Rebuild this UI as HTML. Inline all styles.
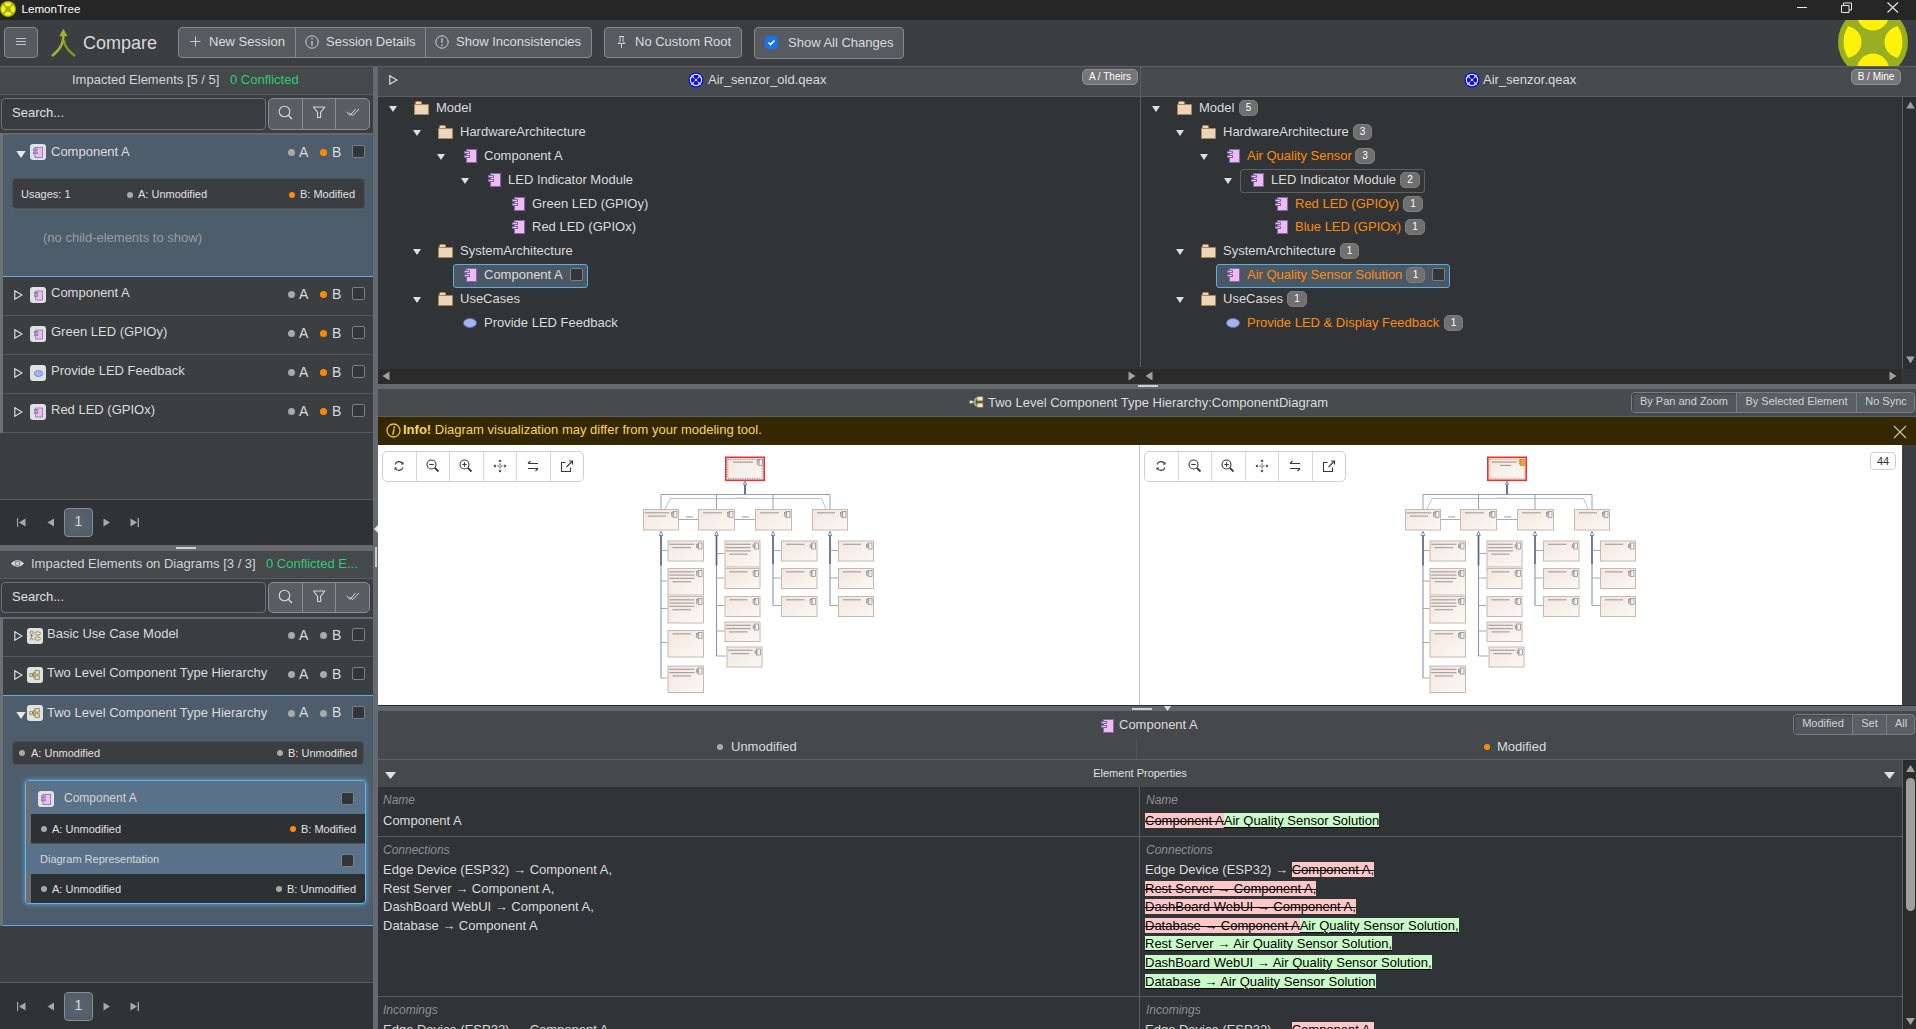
<!DOCTYPE html>
<html><head><meta charset="utf-8">
<style>
*{box-sizing:border-box;margin:0;padding:0}
html,body{width:1916px;height:1029px;overflow:hidden;background:#3b3f42}
body{font-family:"Liberation Sans",sans-serif;font-size:13px;color:#dcdcdc;position:relative}
.a{position:absolute}
.t{position:absolute;white-space:nowrap;line-height:16px}
svg{display:block}
/* title */
#title{left:0;top:0;width:1916px;height:20px;background:#262626}
#toolbar{left:0;top:20px;width:1916px;height:46px;background:#3b3f42;overflow:hidden}
.btn{position:absolute;background:#565b5f;border:1px solid #85898c;border-radius:4px}
.hl{position:absolute;background:#5d6165}
/* left */
.lhdr{background:#45494c}
.row{position:absolute;left:3px;width:370px;height:39px;border-bottom:1px solid #56595c;background:#3b3f42}
.strip{position:absolute;left:0;width:3px;background:#6b7075}
.ibox{position:absolute;width:16px;height:16px;border-radius:3px;background:#dfe1e3}
.dot{position:absolute;width:7px;height:7px;border-radius:50%;background:#a9a9a9}
.dot.o{background:#ff8a00}
.sdot{position:absolute;width:6px;height:6px;border-radius:50%;background:#a9a9a9}
.sdot.o{background:#ff8a00}
.cb{position:absolute;width:13px;height:13px;border:1px solid #7b7f82;border-radius:2px;background:#333638}
.tri-r{position:absolute;width:0;height:0}
.badge{position:absolute;height:15px;border-radius:5px;background:#707070;border:1px solid #7e7e7e;color:#fff;font-size:10px;line-height:13px;text-align:center;font-weight:normal}
.orange{color:#ff8a0d}
</style></head>
<body>
<svg width="0" height="0" style="position:absolute">
<defs>
<symbol id="comp" viewBox="0 0 13 14">
<rect x="2.5" y="0.5" width="10" height="13" fill="#f0baf0" stroke="#7c6aa6"/>
<rect x="0.5" y="2.5" width="5" height="2" fill="#f0baf0" stroke="#7c6aa6"/>
<rect x="0.5" y="6.5" width="5" height="2" fill="#f0baf0" stroke="#7c6aa6"/>
</symbol>
<symbol id="folder" viewBox="0 0 16 14">
<path d="M1.5 3.5 V1.5 Q1.5 0.5 2.5 0.5 H6.5 Q7.5 0.5 7.5 1.5 V3.5z" fill="#ecd5ba" stroke="#a98458" stroke-width="1"/>
<path d="M0.5 3.5 h14 v10 h-14z" fill="#ecd5ba" stroke="#a98458" stroke-width="1"/>
</symbol>
<symbol id="ellipse" viewBox="0 0 14 10">
<ellipse cx="7" cy="5" rx="6.5" ry="4.5" fill="#a5b4f0" stroke="#5a6aa8" stroke-width="1"/>
</symbol>
<symbol id="trid" viewBox="0 0 8 6"><path d="M0 0 H8 L4 6z" fill="#e0e0e0"/></symbol>
<symbol id="trio" viewBox="0 0 9 10"><path d="M0.8 0.8 L8 5 L0.8 9.2z" fill="none" stroke="#e4e4e4" stroke-width="1.15" stroke-linejoin="miter"/></symbol>
<symbol id="ucd" viewBox="0 0 14 14">
<circle cx="3" cy="3" r="1.8" fill="none" stroke="#7a7040" stroke-width="0.9"/><path d="M3 5V9M1 6.5H5M3 9L1.2 12M3 9L4.8 12" stroke="#7a7040" stroke-width="0.9" fill="none"/>
<ellipse cx="10" cy="4" rx="3.3" ry="2" fill="#f0e0b0" stroke="#7a7040" stroke-width="0.9"/><ellipse cx="10" cy="10" rx="3.3" ry="2" fill="#f0e0b0" stroke="#7a7040" stroke-width="0.9"/>
</symbol>
<symbol id="cd" viewBox="0 0 14 14">
<rect x="7" y="2" width="5" height="4" fill="#f0e0b0" stroke="#7a7040" stroke-width="0.9"/><rect x="7" y="8" width="5" height="4" fill="#f0e0b0" stroke="#7a7040" stroke-width="0.9"/>
<rect x="1" y="5.5" width="3" height="3" fill="#f0e0b0" stroke="#7a7040" stroke-width="0.9"/><path d="M4 7H5.5V4H7M5.5 7V10H7" fill="none" stroke="#7a7040" stroke-width="0.9"/>
</symbol>
</defs>
</svg>

<!-- TITLE BAR -->
<div id="title" class="a">
<svg class="a" style="left:0;top:0.5px" width="16" height="16" viewBox="0 0 70 70">
<defs><clipPath id="lc1"><circle cx="35" cy="35" r="29.5"/></clipPath></defs>
<circle cx="35" cy="35" r="35" fill="#9aae22"/>
<g clip-path="url(#lc1)" fill="#fff10a"><circle cx="7.5" cy="35" r="16"/><circle cx="62.5" cy="35" r="16"/><circle cx="35" cy="7.5" r="16"/><circle cx="35" cy="62.5" r="16"/></g>
</svg>
<div class="t" style="left:21.5px;top:2px;font-size:11.6px;color:#fff;line-height:14px">LemonTree</div>
<div class="a" style="left:1797px;top:7px;width:10px;height:1px;background:#e8e8e8"></div>
<svg class="a" style="left:1841px;top:2px" width="12" height="11" viewBox="0 0 12 11"><path d="M0.5 3.5h7.5v7h-7.5z M2.5 3.5v-2.5h8v7h-2.5" fill="none" stroke="#e8e8e8" stroke-width="1"/></svg>
<svg class="a" style="left:1887px;top:2px" width="12" height="11" viewBox="0 0 12 11"><path d="M0.5 0.5L11 10.5M11 0.5L0.5 10.5" fill="none" stroke="#e8e8e8" stroke-width="1.1"/></svg>
</div>

<!-- TOOLBAR -->
<div id="toolbar" class="a">
<div class="btn" style="left:4px;top:7px;width:34px;height:31px"></div>
<div class="a" style="left:16px;top:18px;width:10px;height:1px;background:#c4c4c4"></div>
<div class="a" style="left:16px;top:21px;width:10px;height:1px;background:#c4c4c4"></div>
<div class="a" style="left:16px;top:24px;width:10px;height:1px;background:#c4c4c4"></div>
<svg class="a" style="left:50px;top:8px" width="27" height="29" viewBox="50 28 27 29">
<path d="M63.8 40 C64.5 47 69 51 75 56" fill="none" stroke="#86951f" stroke-width="2.5"/>
<path d="M63.4 35 C63.4 45 59 50 52 56" fill="none" stroke="#a3b22e" stroke-width="2.5"/>
<path d="M63.4 28.8 L59.2 36.2 H67.6z" fill="#a3b22e"/>
</svg>
<div class="t" style="left:83px;top:13px;font-size:18px;line-height:20px;color:#dadada">Compare</div>
<div class="btn" style="left:178px;top:7px;width:414px;height:31px"></div>
<div class="a" style="left:295px;top:8px;width:1px;height:29px;background:#85898c"></div>
<div class="a" style="left:425px;top:8px;width:1px;height:29px;background:#85898c"></div>
<svg class="a" style="left:190px;top:16px" width="11" height="11" viewBox="0 0 11 11"><path d="M5.5 0.5V10.5M0.5 5.5H10.5" stroke="#d0d0d0" stroke-width="1"/></svg>
<div class="t" style="left:209px;top:14px;color:#dcdcdc">New Session</div>
<svg class="a" style="left:305px;top:15px" width="14" height="14" viewBox="0 0 14 14"><circle cx="7" cy="7" r="6.2" fill="none" stroke="#d0d0d0" stroke-width="1"/><path d="M7 6V11" stroke="#d0d0d0" stroke-width="1.2"/><circle cx="7" cy="3.8" r="0.8" fill="#d0d0d0"/></svg>
<div class="t" style="left:326px;top:14px;color:#dcdcdc">Session Details</div>
<svg class="a" style="left:435px;top:15px" width="14" height="14" viewBox="0 0 14 14"><circle cx="7" cy="7" r="6.2" fill="none" stroke="#d0d0d0" stroke-width="1"/><path d="M7 3V8" stroke="#d0d0d0" stroke-width="1.2"/><circle cx="7" cy="10.2" r="0.8" fill="#d0d0d0"/></svg>
<div class="t" style="left:456px;top:14px;color:#dcdcdc">Show Inconsistencies</div>
<div class="btn" style="left:604px;top:7px;width:138px;height:31px"></div>
<svg class="a" style="left:616px;top:15px" width="11" height="14" viewBox="0 0 11 14"><path d="M3 1.5H8M4 1.5V6.5L2 8.5H9L7 6.5V1.5M5.5 8.5V13" fill="none" stroke="#d0d0d0" stroke-width="1"/></svg>
<div class="t" style="left:635px;top:14px;color:#dcdcdc">No Custom Root</div>
<div class="btn" style="left:754px;top:7px;width:150px;height:32px"></div>
<div class="a" style="left:765px;top:16px;width:13px;height:13px;border-radius:3px;background:#1a73e8"></div>
<svg class="a" style="left:765px;top:16px" width="13" height="13" viewBox="0 0 13 13"><path d="M3.5 6.5L5.5 8.5L9.5 4.5" fill="none" stroke="#fff" stroke-width="1.6"/></svg>
<div class="t" style="left:788px;top:15px;color:#dcdcdc">Show All Changes</div>
<svg class="a" style="left:1837px;top:-14px" width="72" height="72" viewBox="-1 -1 72 72">
<defs><clipPath id="lc2"><circle cx="35" cy="35" r="29.5"/></clipPath></defs>
<circle cx="35" cy="35" r="35" fill="#9aae22"/>
<g clip-path="url(#lc2)" fill="#fff10a"><circle cx="7.5" cy="35" r="16"/><circle cx="62.5" cy="35" r="16"/><circle cx="35" cy="7.5" r="16"/><circle cx="35" cy="62.5" r="16"/></g>
</svg>
</div>
<div class="a" style="left:0;top:66px;width:1916px;height:1px;background:#5d6165"></div>

<!-- LEFT PANEL -->
<div class="a" style="left:0;top:67px;width:373px;height:962px;background:#3b3f42"></div>
<div class="a" style="left:0;top:67px;width:373px;height:27px;background:#45494c"></div>
<div class="a" style="left:0;top:94px;width:373px;height:1px;background:#5a5e61"></div>
<div class="t" style="left:72px;top:72px;color:#d4d4d4">Impacted Elements [5 / 5]</div>
<div class="t" style="left:230px;top:72px;color:#2ecc71">0 Conflicted</div>
<div class="a" style="left:1px;top:98px;width:265px;height:32px;border:1px solid #6d7174;border-radius:4px;background:#393d40"></div>
<div class="t" style="left:12px;top:105px;color:#e0e0e0">Search...</div>
<div class="a" style="left:268px;top:98px;width:102px;height:32px;border:1px solid #8a8e91;border-radius:5px;background:#595e62"></div>
<div class="a" style="left:302px;top:99px;width:1px;height:30px;background:#8a8e91"></div>
<div class="a" style="left:335px;top:99px;width:1px;height:30px;background:#8a8e91"></div>
<svg class="a" style="left:278px;top:105px" width="16" height="16" viewBox="0 0 16 16"><circle cx="6.5" cy="6.5" r="5.3" fill="none" stroke="#d8d8d8" stroke-width="1.1"/><path d="M10.3 10.3L14 14" stroke="#d8d8d8" stroke-width="1.4"/></svg>
<svg class="a" style="left:312px;top:106px" width="14" height="13" viewBox="0 0 14 13"><path d="M1.5 1H12.8L8.6 6.3V11.5H5.6V6.3z" fill="none" stroke="#d8d8d8" stroke-width="1.1" stroke-linejoin="round"/></svg>
<svg class="a" style="left:346px;top:108px" width="14" height="9" viewBox="0 0 14 9"><path d="M0.7 3.7L4.2 7.5L9.5 1M3.5 5L6.9 7.5L13 1" fill="none" stroke="#d8d8d8" stroke-width="1"/></svg>
<div class="a" style="left:0;top:133px;width:373px;height:2px;background:#65696c"></div>
<!-- selected item -->
<div class="a" style="left:0;top:133px;width:3px;height:144px;background:#6c7175"></div>
<div class="a" style="left:3px;top:135px;width:370px;height:141px;background:#4d5d6c"></div>
<div class="a" style="left:3px;top:276px;width:370px;height:1px;background:#5aaee0"></div>
<svg class="a" style="left:16px;top:151px" width="10" height="7" viewBox="0 0 8 6"><path d="M0 0H8L4 6z" fill="#e8e8e8"/></svg>
<div class="ibox" style="left:30px;top:144px"></div>
<svg class="a" style="left:33px;top:147px" width="10" height="11"><use href="#comp"/></svg>
<div class="t" style="left:51px;top:144px">Component A</div>
<div class="dot" style="left:288px;top:149px"></div><div class="t" style="left:299px;top:144px;font-size:14px">A</div>
<div class="dot o" style="left:320px;top:149px"></div><div class="t" style="left:332px;top:144px;font-size:14px">B</div>
<div class="cb" style="left:352px;top:145px"></div>

<div class="a" style="left:12px;top:178px;width:353px;height:31px;border-radius:4px;background:#3a3e41;border:1px solid #4e5255"></div>
<div class="t" style="left:21px;top:186px;font-size:11px;color:#e0e0e0">Usages: 1</div>
<div class="sdot" style="left:127px;top:192px"></div><div class="t" style="left:138px;top:186px;font-size:11px;color:#e0e0e0">A: Unmodified</div>
<div class="sdot o" style="left:289px;top:192px"></div><div class="t" style="left:300px;top:186px;font-size:11px;color:#e0e0e0">B: Modified</div>
<div class="t" style="left:43px;top:230px;color:#9a9ea2">(no child-elements to show)</div>
<div class="a" style="left:3px;top:277px;width:370px;height:38px;background:#3b3f42"></div>
<div class="a" style="left:3px;top:315px;width:370px;height:1px;background:#56595c"></div>
<svg class="a" style="left:14px;top:290px" width="9" height="10"><use href="#trio"/></svg>
<div class="ibox" style="left:30px;top:287px"></div>
<svg class="a" style="left:34px;top:290px" width="9" height="11"><use href="#comp"/></svg>
<div class="t" style="left:51px;top:285px">Component A</div>
<div class="dot" style="left:288px;top:291px"></div><div class="t" style="left:299px;top:286px;font-size:14px">A</div>
<div class="dot o" style="left:320px;top:291px"></div><div class="t" style="left:332px;top:286px;font-size:14px">B</div>
<div class="cb" style="left:352px;top:287px"></div>
<div class="a" style="left:3px;top:316px;width:370px;height:38px;background:#3b3f42"></div>
<div class="a" style="left:3px;top:354px;width:370px;height:1px;background:#56595c"></div>
<svg class="a" style="left:14px;top:329px" width="9" height="10"><use href="#trio"/></svg>
<div class="ibox" style="left:30px;top:326px"></div>
<svg class="a" style="left:34px;top:329px" width="9" height="11"><use href="#comp"/></svg>
<div class="t" style="left:51px;top:324px">Green LED (GPIOy)</div>
<div class="dot" style="left:288px;top:330px"></div><div class="t" style="left:299px;top:325px;font-size:14px">A</div>
<div class="dot o" style="left:320px;top:330px"></div><div class="t" style="left:332px;top:325px;font-size:14px">B</div>
<div class="cb" style="left:352px;top:326px"></div>
<div class="a" style="left:3px;top:355px;width:370px;height:38px;background:#3b3f42"></div>
<div class="a" style="left:3px;top:393px;width:370px;height:1px;background:#56595c"></div>
<svg class="a" style="left:14px;top:368px" width="9" height="10"><use href="#trio"/></svg>
<div class="ibox" style="left:30px;top:365px"></div>
<svg class="a" style="left:34px;top:368px" width="9" height="11"><use href="#ellipse"/></svg>
<div class="t" style="left:51px;top:363px">Provide LED Feedback</div>
<div class="dot" style="left:288px;top:369px"></div><div class="t" style="left:299px;top:364px;font-size:14px">A</div>
<div class="dot o" style="left:320px;top:369px"></div><div class="t" style="left:332px;top:364px;font-size:14px">B</div>
<div class="cb" style="left:352px;top:365px"></div>
<div class="a" style="left:3px;top:394px;width:370px;height:38px;background:#3b3f42"></div>
<div class="a" style="left:3px;top:432px;width:370px;height:1px;background:#56595c"></div>
<svg class="a" style="left:14px;top:407px" width="9" height="10"><use href="#trio"/></svg>
<div class="ibox" style="left:30px;top:404px"></div>
<svg class="a" style="left:34px;top:407px" width="9" height="11"><use href="#comp"/></svg>
<div class="t" style="left:51px;top:402px">Red LED (GPIOx)</div>
<div class="dot" style="left:288px;top:408px"></div><div class="t" style="left:299px;top:403px;font-size:14px">A</div>
<div class="dot o" style="left:320px;top:408px"></div><div class="t" style="left:332px;top:403px;font-size:14px">B</div>
<div class="cb" style="left:352px;top:404px"></div>
<div class="a" style="left:0;top:277px;width:3px;height:156px;background:#6c7175"></div>
<div class="a" style="left:0;top:499px;width:373px;height:1px;background:#5a5e61"></div>
<div class="a" style="left:0;top:500px;width:373px;height:45px;background:#303335"></div>
<svg class="a" style="left:17px;top:518px" width="9" height="9" viewBox="0 0 9 9"><path d="M0.5 0V9" stroke="#a8a8a8" stroke-width="1.3"/><path d="M8.5 0.5V8.5L2 4.5z" fill="#a8a8a8"/></svg>
<svg class="a" style="left:47px;top:518px" width="8" height="9" viewBox="0 0 8 9"><path d="M7 0.5V8.5L0.5 4.5z" fill="#a8a8a8"/></svg>
<div class="a" style="left:64px;top:508px;width:29px;height:29px;border:1px solid #868e95;border-radius:4px;background:radial-gradient(ellipse at center,#5b6670 0%,#4f5a65 100%)"></div>
<div class="t" style="left:64px;top:513px;width:29px;text-align:center;color:#d8d8d8;font-size:14px">1</div>
<svg class="a" style="left:103px;top:518px" width="8" height="9" viewBox="0 0 8 9"><path d="M0.5 0.5V8.5L7 4.5z" fill="#a8a8a8"/></svg>
<svg class="a" style="left:130px;top:518px" width="9" height="9" viewBox="0 0 9 9"><path d="M0.5 0.5V8.5L7 4.5z" fill="#a8a8a8"/><path d="M8.3 0V9" stroke="#a8a8a8" stroke-width="1.3"/></svg>
<div class="a" style="left:0;top:545px;width:373px;height:6px;background:#656a6e"></div>
<div class="a" style="left:176px;top:547px;width:20px;height:2px;background:#d0d0d0"></div>
<div class="a" style="left:0;top:551px;width:373px;height:27px;background:#45494c"></div>
<div class="a" style="left:0;top:578px;width:373px;height:1px;background:#5a5e61"></div>
<svg class="a" style="left:10px;top:558px" width="15" height="11" viewBox="0 0 15 11"><path d="M0.8 5.5Q7.5 -1.5 14.2 5.5Q7.5 12.5 0.8 5.5z" fill="#d8d8d8"/><circle cx="7.5" cy="5.5" r="2.9" fill="#8e9296"/><circle cx="7.5" cy="5.5" r="1.6" fill="#d8d8d8"/></svg>
<div class="t" style="left:31px;top:556px;color:#d4d4d4">Impacted Elements on Diagrams [3 / 3]</div>
<div class="t" style="left:266px;top:556px;color:#2ecc71">0 Conflicted E...</div>
<div class="a" style="left:1px;top:582px;width:265px;height:31px;border:1px solid #6d7174;border-radius:4px;background:#393d40"></div>
<div class="t" style="left:12px;top:589px;color:#e0e0e0">Search...</div>
<div class="a" style="left:268px;top:582px;width:102px;height:31px;border:1px solid #8a8e91;border-radius:5px;background:#595e62"></div>
<div class="a" style="left:302px;top:583px;width:1px;height:29px;background:#8a8e91"></div>
<div class="a" style="left:335px;top:583px;width:1px;height:29px;background:#8a8e91"></div>
<svg class="a" style="left:278px;top:589px" width="16" height="16" viewBox="0 0 16 16"><circle cx="6.5" cy="6.5" r="5.3" fill="none" stroke="#d8d8d8" stroke-width="1.1"/><path d="M10.3 10.3L14 14" stroke="#d8d8d8" stroke-width="1.4"/></svg>
<svg class="a" style="left:312px;top:590px" width="14" height="13" viewBox="0 0 14 13"><path d="M1.5 1H12.8L8.6 6.3V11.5H5.6V6.3z" fill="none" stroke="#d8d8d8" stroke-width="1.1" stroke-linejoin="round"/></svg>
<svg class="a" style="left:346px;top:592px" width="14" height="9" viewBox="0 0 14 9"><path d="M0.7 3.7L4.2 7.5L9.5 1M3.5 5L6.9 7.5L13 1" fill="none" stroke="#d8d8d8" stroke-width="1"/></svg>
<div class="a" style="left:0;top:617px;width:373px;height:2px;background:#65696c"></div>
<div class="a" style="left:3px;top:619px;width:370px;height:37px;background:#3b3f42"></div>
<div class="a" style="left:3px;top:656px;width:370px;height:1px;background:#56595c"></div>
<svg class="a" style="left:14px;top:631px" width="9" height="10"><use href="#trio"/></svg>
<div class="ibox" style="left:27px;top:628px"></div>
<svg class="a" style="left:29px;top:630px" width="12" height="12"><use href="#ucd"/></svg>
<div class="t" style="left:47px;top:626px">Basic Use Case Model</div>
<div class="dot" style="left:288px;top:632px"></div><div class="t" style="left:299px;top:627px;font-size:14px">A</div>
<div class="dot" style="left:320px;top:632px"></div><div class="t" style="left:332px;top:627px;font-size:14px">B</div>
<div class="cb" style="left:352px;top:628px"></div>
<div class="a" style="left:3px;top:657px;width:370px;height:38px;background:#3b3f42"></div>
<div class="a" style="left:3px;top:695px;width:370px;height:1px;background:#56595c"></div>
<svg class="a" style="left:14px;top:670px" width="9" height="10"><use href="#trio"/></svg>
<div class="ibox" style="left:27px;top:667px"></div>
<svg class="a" style="left:29px;top:669px" width="12" height="12"><use href="#cd"/></svg>
<div class="t" style="left:47px;top:665px">Two Level Component Type Hierarchy</div>
<div class="dot" style="left:288px;top:671px"></div><div class="t" style="left:299px;top:666px;font-size:14px">A</div>
<div class="dot" style="left:320px;top:671px"></div><div class="t" style="left:332px;top:666px;font-size:14px">B</div>
<div class="cb" style="left:352px;top:667px"></div>
<div class="a" style="left:0;top:617px;width:3px;height:78px;background:#6c7175"></div>
<div class="a" style="left:0;top:695px;width:3px;height:231px;background:#6c7175"></div>
<div class="a" style="left:3px;top:695px;width:370px;height:1px;background:#5aaee0"></div>
<div class="a" style="left:3px;top:696px;width:370px;height:229px;background:#4d5d6c"></div>
<div class="a" style="left:3px;top:925px;width:370px;height:1px;background:#5aaee0"></div>
<svg class="a" style="left:16px;top:712px" width="10" height="7" viewBox="0 0 8 6"><path d="M0 0H8L4 6z" fill="#e8e8e8"/></svg>
<div class="ibox" style="left:27px;top:705px"></div>
<svg class="a" style="left:29px;top:707px" width="12" height="12"><use href="#cd"/></svg>
<div class="t" style="left:47px;top:705px">Two Level Component Type Hierarchy</div>
<div class="dot" style="left:288px;top:710px"></div><div class="t" style="left:299px;top:704px;font-size:14px">A</div>
<div class="dot" style="left:320px;top:710px"></div><div class="t" style="left:332px;top:704px;font-size:14px">B</div>
<div class="cb" style="left:352px;top:706px"></div>

<div class="a" style="left:12px;top:741px;width:352px;height:24px;border-radius:4px;background:#3a3e41;border:1px solid #4e5255"></div>
<div class="sdot" style="left:19px;top:750px"></div><div class="t" style="left:31px;top:745px;font-size:11px;color:#e0e0e0">A: Unmodified</div>
<div class="sdot" style="left:277px;top:750px"></div><div class="t" style="left:288px;top:745px;font-size:11px;color:#e0e0e0">B: Unmodified</div>
<!-- card -->
<div class="a" style="left:25px;top:780px;width:341px;height:124px;border:1px solid #62b8ee;border-radius:4px;box-shadow:0 0 4px 1px rgba(98,184,238,0.6);background:#2e3133;overflow:hidden">
 <div class="a" style="left:0;top:0;width:5px;height:122px;background:#6b6f72"></div>
 <div class="a" style="left:5px;top:0;width:335px;height:33px;background:#5a7289"></div>
 <div class="a" style="left:5px;top:62px;width:335px;height:1px;background:#555"></div>
 <div class="a" style="left:0px;top:63px;width:340px;height:30px;background:#5a7289"></div>
</div>
<div class="ibox" style="left:38px;top:791px"></div>
<svg class="a" style="left:41px;top:794px" width="10" height="11"><use href="#comp"/></svg>
<div class="t" style="left:64px;top:790px;color:#d4d4d4;font-size:12px">Component A</div>
<div class="cb" style="left:341px;top:792px"></div>
<div class="sdot" style="left:41px;top:826px"></div><div class="t" style="left:52px;top:821px;font-size:11px;color:#e0e0e0">A: Unmodified</div>
<div class="sdot o" style="left:290px;top:826px"></div><div class="t" style="left:301px;top:821px;font-size:11px;color:#e0e0e0">B: Modified</div>
<div class="t" style="left:40px;top:851px;font-size:11px;color:#d8d8d8">Diagram Representation</div>
<div class="cb" style="left:341px;top:854px"></div>
<div class="sdot" style="left:41px;top:886px"></div><div class="t" style="left:52px;top:881px;font-size:11px;color:#e0e0e0">A: Unmodified</div>
<div class="sdot" style="left:276px;top:886px"></div><div class="t" style="left:287px;top:881px;font-size:11px;color:#e0e0e0">B: Unmodified</div>
<div class="a" style="left:0;top:982px;width:373px;height:1px;background:#5a5e61"></div>
<div class="a" style="left:0;top:983px;width:373px;height:46px;background:#303335"></div>
<svg class="a" style="left:17px;top:1002px" width="9" height="9" viewBox="0 0 9 9"><path d="M0.5 0V9" stroke="#a8a8a8" stroke-width="1.3"/><path d="M8.5 0.5V8.5L2 4.5z" fill="#a8a8a8"/></svg>
<svg class="a" style="left:47px;top:1002px" width="8" height="9" viewBox="0 0 8 9"><path d="M7 0.5V8.5L0.5 4.5z" fill="#a8a8a8"/></svg>
<div class="a" style="left:64px;top:992px;width:29px;height:29px;border:1px solid #868e95;border-radius:4px;background:radial-gradient(ellipse at center,#5b6670 0%,#4f5a65 100%)"></div>
<div class="t" style="left:64px;top:997px;width:29px;text-align:center;color:#d8d8d8;font-size:14px">1</div>
<svg class="a" style="left:103px;top:1002px" width="8" height="9" viewBox="0 0 8 9"><path d="M0.5 0.5V8.5L7 4.5z" fill="#a8a8a8"/></svg>
<svg class="a" style="left:130px;top:1002px" width="9" height="9" viewBox="0 0 9 9"><path d="M0.5 0.5V8.5L7 4.5z" fill="#a8a8a8"/><path d="M8.3 0V9" stroke="#a8a8a8" stroke-width="1.3"/></svg>

<!-- SPLITTER -->
<div class="a" style="left:373px;top:67px;width:5px;height:962px;background:#656a6e"></div>
<svg class="a" style="left:374px;top:525px" width="4" height="8" viewBox="0 0 4 8"><path d="M0 4L4 0V8z" fill="#e8e8e8"/></svg>
<div class="a" style="left:375px;top:547px;width:2px;height:20px;background:#c8c8c8"></div>

<!-- MAIN TREE -->
<div class="a" style="left:378px;top:67px;width:1538px;height:302px;background:#303436"></div>
<div class="a" style="left:378px;top:67px;width:1538px;height:29px;background:#474b4e"></div>
<div class="a" style="left:378px;top:96px;width:1538px;height:1px;background:#5a5e61"></div>
<div class="a" style="left:1140px;top:67px;width:1px;height:300px;background:#5a5e61"></div>
<svg class="a" style="left:389px;top:75px" width="9" height="10"><use href="#trio"/></svg>
<svg class="a" style="left:688px;top:72px" width="16" height="16" viewBox="0 0 16 16"><circle cx="8" cy="8" r="7.6" fill="#0a0ae6"/><circle cx="8" cy="8" r="5.6" fill="none" stroke="#e8e8ff" stroke-width="1.2"/><path d="M3.5 3.5Q8 8 12.5 12.5M12.5 3.5Q8 8 3.5 12.5" fill="none" stroke="#e8e8ff" stroke-width="1.1"/><circle cx="5.2" cy="8" r="1.8" fill="#0a0ae6"/><circle cx="10.8" cy="8" r="1.8" fill="#0a0ae6"/><circle cx="8" cy="5.2" r="1.8" fill="#0a0ae6"/><circle cx="8" cy="10.8" r="1.8" fill="#0a0ae6"/></svg>
<div class="t" style="left:708px;top:72px;color:#dcdcdc">Air_senzor_old.qeax</div>
<div class="a" style="left:1082px;top:69px;width:56px;height:16px;border-radius:5px;background:#767676;border:1px solid #8f9294"></div><div class="t" style="left:1082px;top:69px;width:56px;text-align:center;font-size:10px;line-height:15px;color:#fff">A / Theirs</div>
<svg class="a" style="left:1464px;top:72px" width="16" height="16" viewBox="0 0 16 16"><circle cx="8" cy="8" r="7.6" fill="#0a0ae6"/><circle cx="8" cy="8" r="5.6" fill="none" stroke="#e8e8ff" stroke-width="1.2"/><path d="M3.5 3.5Q8 8 12.5 12.5M12.5 3.5Q8 8 3.5 12.5" fill="none" stroke="#e8e8ff" stroke-width="1.1"/><circle cx="5.2" cy="8" r="1.8" fill="#0a0ae6"/><circle cx="10.8" cy="8" r="1.8" fill="#0a0ae6"/><circle cx="8" cy="5.2" r="1.8" fill="#0a0ae6"/><circle cx="8" cy="10.8" r="1.8" fill="#0a0ae6"/></svg>
<div class="t" style="left:1483px;top:72px;color:#dcdcdc">Air_senzor.qeax</div>
<div class="a" style="left:1851px;top:69px;width:50px;height:16px;border-radius:5px;background:#767676;border:1px solid #8f9294"></div><div class="t" style="left:1851px;top:69px;width:50px;text-align:center;font-size:10px;line-height:15px;color:#fff">B / Mine</div>
<svg class="a" style="left:389px;top:106px" width="8" height="6"><use href="#trid"/></svg>
<svg class="a" style="left:414px;top:101px" width="16" height="14"><use href="#folder"/></svg>
<div class="t " style="left:436px;top:100px">Model</div>
<svg class="a" style="left:413px;top:130px" width="8" height="6"><use href="#trid"/></svg>
<svg class="a" style="left:438px;top:125px" width="16" height="14"><use href="#folder"/></svg>
<div class="t " style="left:460px;top:124px">HardwareArchitecture</div>
<svg class="a" style="left:437px;top:154px" width="8" height="6"><use href="#trid"/></svg>
<svg class="a" style="left:464px;top:149px" width="13" height="14"><use href="#comp"/></svg>
<div class="t " style="left:484px;top:148px">Component A</div>
<svg class="a" style="left:461px;top:178px" width="8" height="6"><use href="#trid"/></svg>
<svg class="a" style="left:488px;top:173px" width="13" height="14"><use href="#comp"/></svg>
<div class="t " style="left:508px;top:172px">LED Indicator Module</div>
<svg class="a" style="left:512px;top:197px" width="13" height="14"><use href="#comp"/></svg>
<div class="t " style="left:532px;top:196px">Green LED (GPIOy)</div>
<svg class="a" style="left:512px;top:220px" width="13" height="14"><use href="#comp"/></svg>
<div class="t " style="left:532px;top:219px">Red LED (GPIOx)</div>
<svg class="a" style="left:413px;top:249px" width="8" height="6"><use href="#trid"/></svg>
<svg class="a" style="left:438px;top:244px" width="16" height="14"><use href="#folder"/></svg>
<div class="t " style="left:460px;top:243px">SystemArchitecture</div>
<div class="a" style="left:453px;top:264px;width:135px;height:24px;border:1px solid #5aaee0;border-radius:3px;background:#4a5866"></div>
<svg class="a" style="left:464px;top:268px" width="13" height="14"><use href="#comp"/></svg>
<div class="t " style="left:484px;top:267px">Component A</div>
<div class="cb" style="left:570px;top:268px"></div>
<svg class="a" style="left:413px;top:297px" width="8" height="6"><use href="#trid"/></svg>
<svg class="a" style="left:438px;top:292px" width="16" height="14"><use href="#folder"/></svg>
<div class="t " style="left:460px;top:291px">UseCases</div>
<svg class="a" style="left:463px;top:318px" width="14" height="10"><use href="#ellipse"/></svg>
<div class="t " style="left:484px;top:315px">Provide LED Feedback</div>
<svg class="a" style="left:1152px;top:106px" width="8" height="6"><use href="#trid"/></svg>
<svg class="a" style="left:1177px;top:101px" width="16" height="14"><use href="#folder"/></svg>
<div class="t " style="left:1199px;top:100px">Model</div>
<div class="badge" style="left:1239px;top:100px;width:19px;height:16px;line-height:14px">5</div>
<svg class="a" style="left:1176px;top:130px" width="8" height="6"><use href="#trid"/></svg>
<svg class="a" style="left:1201px;top:125px" width="16" height="14"><use href="#folder"/></svg>
<div class="t " style="left:1223px;top:124px">HardwareArchitecture</div>
<div class="badge" style="left:1353px;top:124px;width:19px;height:16px;line-height:14px">3</div>
<svg class="a" style="left:1200px;top:154px" width="8" height="6"><use href="#trid"/></svg>
<svg class="a" style="left:1227px;top:149px" width="13" height="14"><use href="#comp"/></svg>
<div class="t orange" style="left:1247px;top:148px">Air Quality Sensor</div>
<div class="badge" style="left:1355px;top:148px;width:20px;height:16px;line-height:14px">3</div>
<div class="a" style="left:1240px;top:169px;width:185px;height:24px;border:1px solid #5f6265;border-radius:3px;background:#333536"></div>
<svg class="a" style="left:1224px;top:178px" width="8" height="6"><use href="#trid"/></svg>
<svg class="a" style="left:1251px;top:173px" width="13" height="14"><use href="#comp"/></svg>
<div class="t " style="left:1271px;top:172px">LED Indicator Module</div>
<div class="badge" style="left:1400px;top:172px;width:20px;height:16px;line-height:14px">2</div>
<svg class="a" style="left:1275px;top:197px" width="13" height="14"><use href="#comp"/></svg>
<div class="t orange" style="left:1295px;top:196px">Red LED (GPIOy)</div>
<div class="badge" style="left:1403px;top:196px;width:20px;height:16px;line-height:14px">1</div>
<svg class="a" style="left:1275px;top:220px" width="13" height="14"><use href="#comp"/></svg>
<div class="t orange" style="left:1295px;top:219px">Blue LED (GPIOx)</div>
<div class="badge" style="left:1405px;top:219px;width:20px;height:16px;line-height:14px">1</div>
<svg class="a" style="left:1176px;top:249px" width="8" height="6"><use href="#trid"/></svg>
<svg class="a" style="left:1201px;top:244px" width="16" height="14"><use href="#folder"/></svg>
<div class="t " style="left:1223px;top:243px">SystemArchitecture</div>
<div class="badge" style="left:1340px;top:243px;width:19px;height:16px;line-height:14px">1</div>
<div class="a" style="left:1216px;top:264px;width:234px;height:24px;border:1px solid #5aaee0;border-radius:3px;background:#4a5866"></div>
<svg class="a" style="left:1227px;top:268px" width="13" height="14"><use href="#comp"/></svg>
<div class="t orange" style="left:1247px;top:267px">Air Quality Sensor Solution</div>
<div class="badge" style="left:1406px;top:267px;width:19px;height:16px;line-height:14px">1</div>
<div class="cb" style="left:1432px;top:268px"></div>
<svg class="a" style="left:1176px;top:297px" width="8" height="6"><use href="#trid"/></svg>
<svg class="a" style="left:1201px;top:292px" width="16" height="14"><use href="#folder"/></svg>
<div class="t " style="left:1223px;top:291px">UseCases</div>
<div class="badge" style="left:1287px;top:291px;width:20px;height:16px;line-height:14px">1</div>
<svg class="a" style="left:1226px;top:318px" width="14" height="10"><use href="#ellipse"/></svg>
<div class="t orange" style="left:1247px;top:315px">Provide LED &amp; Display Feedback</div>
<div class="badge" style="left:1444px;top:315px;width:19px;height:16px;line-height:14px">1</div>
<div class="a" style="left:1902px;top:97px;width:14px;height:272px;background:#2c2e30"></div>
<div class="a" style="left:1902px;top:97px;width:1px;height:272px;background:#5a5e61"></div>
<svg class="a" style="left:1906px;top:101px" width="9" height="8" viewBox="0 0 9 8"><path d="M4.5 0.5L8.8 7.5H0.2z" fill="#a0a0a0"/></svg>
<svg class="a" style="left:1906px;top:356px" width="9" height="8" viewBox="0 0 9 8"><path d="M4.5 7.5L8.8 0.5H0.2z" fill="#a0a0a0"/></svg>
<div class="a" style="left:378px;top:369px;width:1523px;height:15px;background:#2b2b2b"></div>
<div class="a" style="left:1901px;top:369px;width:15px;height:15px;background:#303436"></div>
<svg class="a" style="left:382px;top:371px" width="8" height="10" viewBox="0 0 8 10"><path d="M0.5 5L7.5 0.5V9.5z" fill="#a0a0a0"/></svg>
<svg class="a" style="left:1128px;top:371px" width="8" height="10" viewBox="0 0 8 10"><path d="M7.5 5L0.5 0.5V9.5z" fill="#a0a0a0"/></svg>
<svg class="a" style="left:1145px;top:371px" width="8" height="10" viewBox="0 0 8 10"><path d="M0.5 5L7.5 0.5V9.5z" fill="#a0a0a0"/></svg>
<svg class="a" style="left:1889px;top:371px" width="8" height="10" viewBox="0 0 8 10"><path d="M7.5 5L0.5 0.5V9.5z" fill="#a0a0a0"/></svg>
<div class="a" style="left:378px;top:384px;width:1538px;height:5px;background:#656a6e"></div>
<div class="a" style="left:1138px;top:385px;width:20px;height:2px;background:#d0d0d0"></div>


<!-- DIAGRAM -->
<div class="a" style="left:378px;top:389px;width:1538px;height:27px;background:#474b4e"></div>
<div class="a" style="left:378px;top:416px;width:1538px;height:1px;background:#5a5e61"></div>
<svg class="a" style="left:969px;top:396px" width="15" height="12" viewBox="0 0 15 12"><rect x="8" y="0.5" width="6" height="4.5" fill="#f0e8c8" stroke="#7a7040" stroke-width="0.9"/><rect x="8" y="7" width="6" height="4.5" fill="#f0e8c8" stroke="#7a7040" stroke-width="0.9"/><rect x="0.5" y="4.5" width="3.5" height="3" fill="#f0e8c8" stroke="#7a7040" stroke-width="0.8"/><path d="M4 6H6V2.7H8M6 6V9.2H8" fill="none" stroke="#d8d8d8" stroke-width="1"/></svg>
<div class="t" style="left:988px;top:395px;color:#dcdcdc">Two Level Component Type Hierarchy:ComponentDiagram</div>
<div class="a" style="left:1631px;top:392px;width:284px;height:21px;border:1px solid #7a7f83;border-radius:4px;background:#5a5f63"></div>
<div class="a" style="left:1632px;top:393px;width:104px;height:19px;background:#53575b;border-radius:3px 0 0 3px;box-shadow:inset 1px 1px 2px rgba(0,0,0,0.25)"></div>
<div class="a" style="left:1736px;top:393px;width:1px;height:19px;background:#7a7f83"></div>
<div class="a" style="left:1856px;top:393px;width:1px;height:19px;background:#7a7f83"></div>
<div class="t" style="left:1632px;top:394px;width:104px;text-align:center;font-size:11px;line-height:14px;color:#d4d4d4">By Pan and Zoom</div>
<div class="t" style="left:1737px;top:394px;width:119px;text-align:center;font-size:11px;line-height:14px;color:#d4d4d4">By Selected Element</div>
<div class="t" style="left:1857px;top:394px;width:58px;text-align:center;font-size:11px;line-height:14px;color:#d4d4d4">No Sync</div>
<div class="a" style="left:378px;top:417px;width:1538px;height:28px;background:#332800"></div>
<svg class="a" style="left:386px;top:423px" width="15" height="15" viewBox="0 0 15 15"><circle cx="7.5" cy="7.5" r="6.5" fill="none" stroke="#f7c52a" stroke-width="1.3"/><path d="M8 6.2L7 11.2" stroke="#f7c52a" stroke-width="1.5" stroke-linecap="round"/><circle cx="8.3" cy="4.2" r="0.95" fill="#f7c52a"/></svg>
<div class="t" style="left:403px;top:422px;color:#fcd35a"><b>Info!</b> Diagram visualization may differ from your modeling tool.</div>
<svg class="a" style="left:1893px;top:425px" width="14" height="14" viewBox="0 0 14 14"><path d="M1 1L13 13M13 1L1 13" stroke="#c4bfb2" stroke-width="1.2"/></svg>
<div class="a" style="left:378px;top:445px;width:1524px;height:260px;background:#fff"></div>
<div class="a" style="left:1902px;top:445px;width:14px;height:260px;background:#3b3f42"></div>
<div class="a" style="left:1139px;top:445px;width:1px;height:260px;background:#c8c8c8"></div>
<div class="a" style="left:1870px;top:452px;width:26px;height:18px;border:1px solid #cfcfcf;border-radius:4px;background:#fff"></div>
<div class="t" style="left:1870px;top:453px;width:26px;text-align:center;font-size:11px;color:#333">44</div>
<div class="a" style="left:382px;top:451px;width:202px;height:31px;border:1px solid #cfcfcf;border-radius:5px;background:#fff"></div>
<div class="a" style="left:416px;top:452px;width:1px;height:29px;background:#d8d8d8"></div>
<div class="a" style="left:449px;top:452px;width:1px;height:29px;background:#d8d8d8"></div>
<div class="a" style="left:483px;top:452px;width:1px;height:29px;background:#d8d8d8"></div>
<div class="a" style="left:516px;top:452px;width:1px;height:29px;background:#d8d8d8"></div>
<div class="a" style="left:550px;top:452px;width:1px;height:29px;background:#d8d8d8"></div>
<svg class="a" style="left:392px;top:459px" width="14" height="14" viewBox="0 0 14 14"><path d="M3 5.5A4.2 4.2 0 0 1 10.5 4.5M11 8.5A4.2 4.2 0 0 1 3.5 9.5" fill="none" stroke="#3a3a3a" stroke-width="1.1"/><path d="M11.5 2.5V5.5H8.8z M2.5 11.5V8.5H5.2z" fill="#3a3a3a"/></svg>
<svg class="a" style="left:425.5px;top:459px" width="14" height="14" viewBox="0 0 14 14"><circle cx="5.5" cy="5.5" r="4.5" fill="none" stroke="#3a3a3a" stroke-width="1.1"/><path d="M3.3 5.5H7.7" stroke="#3a3a3a" stroke-width="1.1"/><path d="M8.8 8.8L12.5 12.5" stroke="#3a3a3a" stroke-width="1.8"/></svg>
<svg class="a" style="left:459px;top:459px" width="14" height="14" viewBox="0 0 14 14"><circle cx="5.5" cy="5.5" r="4.5" fill="none" stroke="#3a3a3a" stroke-width="1.1"/><path d="M3.3 5.5H7.7M5.5 3.3V7.7" stroke="#3a3a3a" stroke-width="1.1"/><path d="M8.8 8.8L12.5 12.5" stroke="#3a3a3a" stroke-width="1.8"/></svg>
<svg class="a" style="left:493px;top:459px" width="14" height="14" viewBox="0 0 14 14"><path d="M7 1V13M1 7H13" stroke="#3a3a3a" stroke-width="0.9" stroke-dasharray="2 1.2"/><path d="M7 0.5L5.3 2.5H8.7z M7 13.5L5.3 11.5H8.7z M0.5 7L2.5 5.3V8.7z M13.5 7L11.5 5.3V8.7z" fill="#3a3a3a"/></svg>
<svg class="a" style="left:526px;top:459px" width="14" height="14" viewBox="0 0 14 14"><path d="M2 4.5H12M2 4.5L4.5 2M2 9.5H12M12 9.5L9.5 12" fill="none" stroke="#3a3a3a" stroke-width="1.1"/></svg>
<svg class="a" style="left:559.5px;top:459px" width="14" height="14" viewBox="0 0 14 14"><path d="M9 2H12.5V5.5M12.5 2L6.5 8M5.5 3.5H1.5V12.5H10.5V8.5" fill="none" stroke="#3a3a3a" stroke-width="1.1"/></svg>
<div class="a" style="left:1144px;top:451px;width:202px;height:31px;border:1px solid #cfcfcf;border-radius:5px;background:#fff"></div>
<div class="a" style="left:1178px;top:452px;width:1px;height:29px;background:#d8d8d8"></div>
<div class="a" style="left:1211px;top:452px;width:1px;height:29px;background:#d8d8d8"></div>
<div class="a" style="left:1245px;top:452px;width:1px;height:29px;background:#d8d8d8"></div>
<div class="a" style="left:1278px;top:452px;width:1px;height:29px;background:#d8d8d8"></div>
<div class="a" style="left:1312px;top:452px;width:1px;height:29px;background:#d8d8d8"></div>
<svg class="a" style="left:1154px;top:459px" width="14" height="14" viewBox="0 0 14 14"><path d="M3 5.5A4.2 4.2 0 0 1 10.5 4.5M11 8.5A4.2 4.2 0 0 1 3.5 9.5" fill="none" stroke="#3a3a3a" stroke-width="1.1"/><path d="M11.5 2.5V5.5H8.8z M2.5 11.5V8.5H5.2z" fill="#3a3a3a"/></svg>
<svg class="a" style="left:1187.5px;top:459px" width="14" height="14" viewBox="0 0 14 14"><circle cx="5.5" cy="5.5" r="4.5" fill="none" stroke="#3a3a3a" stroke-width="1.1"/><path d="M3.3 5.5H7.7" stroke="#3a3a3a" stroke-width="1.1"/><path d="M8.8 8.8L12.5 12.5" stroke="#3a3a3a" stroke-width="1.8"/></svg>
<svg class="a" style="left:1221px;top:459px" width="14" height="14" viewBox="0 0 14 14"><circle cx="5.5" cy="5.5" r="4.5" fill="none" stroke="#3a3a3a" stroke-width="1.1"/><path d="M3.3 5.5H7.7M5.5 3.3V7.7" stroke="#3a3a3a" stroke-width="1.1"/><path d="M8.8 8.8L12.5 12.5" stroke="#3a3a3a" stroke-width="1.8"/></svg>
<svg class="a" style="left:1255px;top:459px" width="14" height="14" viewBox="0 0 14 14"><path d="M7 1V13M1 7H13" stroke="#3a3a3a" stroke-width="0.9" stroke-dasharray="2 1.2"/><path d="M7 0.5L5.3 2.5H8.7z M7 13.5L5.3 11.5H8.7z M0.5 7L2.5 5.3V8.7z M13.5 7L11.5 5.3V8.7z" fill="#3a3a3a"/></svg>
<svg class="a" style="left:1288px;top:459px" width="14" height="14" viewBox="0 0 14 14"><path d="M2 4.5H12M2 4.5L4.5 2M2 9.5H12M12 9.5L9.5 12" fill="none" stroke="#3a3a3a" stroke-width="1.1"/></svg>
<svg class="a" style="left:1321.5px;top:459px" width="14" height="14" viewBox="0 0 14 14"><path d="M9 2H12.5V5.5M12.5 2L6.5 8M5.5 3.5H1.5V12.5H10.5V8.5" fill="none" stroke="#3a3a3a" stroke-width="1.1"/></svg>
<svg class="a" style="left:0;top:0" width="1916" height="1029" viewBox="0 0 1916 1029"><defs><linearGradient id="bg" x1="0" y1="0" x2="1" y2="1"><stop offset="0" stop-color="#f1e7de"/><stop offset="1" stop-color="#fcf8f4"/></linearGradient></defs><rect x="725.8" y="457.3" width="38.4" height="23" fill="url(#bg)" stroke="#e8323a" stroke-width="1.6"/><rect x="727.8" y="459.3" width="34.4" height="19" fill="none" stroke="#7a7a7a" stroke-width="0.8" stroke-dasharray="1.2 1.2"/><rect x="758.5" y="459.5" width="4" height="6" fill="#f4f4f4" stroke="#777" stroke-width="0.6"/><rect x="757" y="460.7" width="2.4" height="1.2" fill="#f4f4f4" stroke="#777" stroke-width="0.5"/><rect x="757" y="462.9" width="2.4" height="1.2" fill="#f4f4f4" stroke="#777" stroke-width="0.5"/><rect x="733" y="461.5" width="20" height="1.2" fill="#6e6470" opacity="0.6"/><path d="M745 482V494.5" stroke="#5a6482" stroke-width="1.8"/><path d="M743.3 484.8L745 481.2L746.7 484.8z" fill="#fff" stroke="#5a6482" stroke-width="0.7"/><path d="M661 509V494.5H830V509M716.5 494.5V509M773 494.5V509" fill="none" stroke="#8a94b0" stroke-width="0.9"/><path d="M665 509L670 498.5H821.5L826 509" fill="none" stroke="#a8b0c8" stroke-width="0.8"/><rect x="735" y="497.6" width="11" height="1.3" fill="#c0c0c8"/><path d="M679 519.5H698M735 519.5H755" stroke="#8a94b0" stroke-width="0.8"/><rect x="686" y="516.3" width="7" height="1.2" fill="#aaa"/><rect x="742" y="516.3" width="7" height="1.2" fill="#aaa"/><rect x="643.5" y="509.5" width="35" height="20.5" fill="url(#bg)" stroke="#c9b8b0" stroke-width="1"/><rect x="673.0" y="511.5" width="4" height="6" fill="#f4f4f4" stroke="#777" stroke-width="0.6"/><rect x="671.5" y="512.7" width="2.4" height="1.2" fill="#f4f4f4" stroke="#777" stroke-width="0.5"/><rect x="671.5" y="514.9" width="2.4" height="1.2" fill="#f4f4f4" stroke="#777" stroke-width="0.5"/><rect x="644.6" y="512.2" width="24.7" height="1.2" fill="#6e6470" opacity="0.55"/><rect x="647.9" y="515.5" width="18.2" height="1.2" fill="#6e6470" opacity="0.55"/><rect x="698.5" y="509.5" width="36" height="20.5" fill="url(#bg)" stroke="#c9b8b0" stroke-width="1"/><rect x="729.0" y="511.5" width="4" height="6" fill="#f4f4f4" stroke="#777" stroke-width="0.6"/><rect x="727.5" y="512.7" width="2.4" height="1.2" fill="#f4f4f4" stroke="#777" stroke-width="0.5"/><rect x="727.5" y="514.9" width="2.4" height="1.2" fill="#f4f4f4" stroke="#777" stroke-width="0.5"/><rect x="703.1" y="512.2" width="18.8" height="1.2" fill="#6e6470" opacity="0.55"/><rect x="755.5" y="509.5" width="36" height="20.5" fill="url(#bg)" stroke="#c9b8b0" stroke-width="1"/><rect x="786.0" y="511.5" width="4" height="6" fill="#f4f4f4" stroke="#777" stroke-width="0.6"/><rect x="784.5" y="512.7" width="2.4" height="1.2" fill="#f4f4f4" stroke="#777" stroke-width="0.5"/><rect x="784.5" y="514.9" width="2.4" height="1.2" fill="#f4f4f4" stroke="#777" stroke-width="0.5"/><rect x="760.1" y="512.2" width="18.8" height="1.2" fill="#6e6470" opacity="0.55"/><rect x="812.5" y="509.5" width="35" height="20.5" fill="url(#bg)" stroke="#c9b8b0" stroke-width="1"/><rect x="842.0" y="511.5" width="4" height="6" fill="#f4f4f4" stroke="#777" stroke-width="0.6"/><rect x="840.5" y="512.7" width="2.4" height="1.2" fill="#f4f4f4" stroke="#777" stroke-width="0.5"/><rect x="840.5" y="514.9" width="2.4" height="1.2" fill="#f4f4f4" stroke="#777" stroke-width="0.5"/><rect x="817.0" y="512.2" width="18.0" height="1.2" fill="#6e6470" opacity="0.55"/><path d="M661 533V565.75" stroke="#5a6482" stroke-width="1.7"/><path d="M661 565.75V678" stroke="#8a94b0" stroke-width="1.1"/><path d="M659.2 535.5L661 531.3L662.8 535.5z" fill="#fff" stroke="#5a6482" stroke-width="0.7"/><path d="M661 550.5H667.5" stroke="#8a94b0" stroke-width="0.8"/><rect x="668.0" y="541.0" width="35.5" height="20.0" fill="url(#bg)" stroke="#c9b8b0" stroke-width="1"/><rect x="698.0" y="543.0" width="4" height="6" fill="#f4f4f4" stroke="#777" stroke-width="0.6"/><rect x="696.5" y="544.2" width="2.4" height="1.2" fill="#f4f4f4" stroke="#777" stroke-width="0.5"/><rect x="696.5" y="546.4" width="2.4" height="1.2" fill="#f4f4f4" stroke="#777" stroke-width="0.5"/><rect x="669.2" y="543.7" width="25.2" height="1.2" fill="#6e6470" opacity="0.55"/><rect x="672.5" y="547.0" width="18.5" height="1.2" fill="#6e6470" opacity="0.55"/><path d="M661 581H667.5" stroke="#8a94b0" stroke-width="0.8"/><rect x="668.0" y="568.5" width="35.5" height="26.5" fill="url(#bg)" stroke="#c9b8b0" stroke-width="1"/><rect x="698.0" y="570.5" width="4" height="6" fill="#f4f4f4" stroke="#777" stroke-width="0.6"/><rect x="696.5" y="571.7" width="2.4" height="1.2" fill="#f4f4f4" stroke="#777" stroke-width="0.5"/><rect x="696.5" y="573.9" width="2.4" height="1.2" fill="#f4f4f4" stroke="#777" stroke-width="0.5"/><rect x="669.2" y="571.2" width="25.2" height="1.2" fill="#6e6470" opacity="0.55"/><rect x="669.2" y="574.5" width="25.2" height="1.2" fill="#6e6470" opacity="0.55"/><rect x="669.2" y="577.8" width="25.2" height="1.2" fill="#6e6470" opacity="0.55"/><rect x="672.5" y="581.1" width="18.5" height="1.2" fill="#6e6470" opacity="0.55"/><path d="M661 608.5H667.5" stroke="#8a94b0" stroke-width="0.8"/><rect x="668.0" y="596.5" width="35.5" height="26.5" fill="url(#bg)" stroke="#c9b8b0" stroke-width="1"/><rect x="698.0" y="598.5" width="4" height="6" fill="#f4f4f4" stroke="#777" stroke-width="0.6"/><rect x="696.5" y="599.7" width="2.4" height="1.2" fill="#f4f4f4" stroke="#777" stroke-width="0.5"/><rect x="696.5" y="601.9" width="2.4" height="1.2" fill="#f4f4f4" stroke="#777" stroke-width="0.5"/><rect x="669.2" y="599.2" width="25.2" height="1.2" fill="#6e6470" opacity="0.55"/><rect x="669.2" y="602.5" width="25.2" height="1.2" fill="#6e6470" opacity="0.55"/><rect x="669.2" y="605.8" width="25.2" height="1.2" fill="#6e6470" opacity="0.55"/><rect x="672.5" y="609.1" width="18.5" height="1.2" fill="#6e6470" opacity="0.55"/><path d="M661 642.5H667.5" stroke="#8a94b0" stroke-width="0.8"/><rect x="668.0" y="630.5" width="35.5" height="26.5" fill="url(#bg)" stroke="#c9b8b0" stroke-width="1"/><rect x="698.0" y="632.5" width="4" height="6" fill="#f4f4f4" stroke="#777" stroke-width="0.6"/><rect x="696.5" y="633.7" width="2.4" height="1.2" fill="#f4f4f4" stroke="#777" stroke-width="0.5"/><rect x="696.5" y="635.9" width="2.4" height="1.2" fill="#f4f4f4" stroke="#777" stroke-width="0.5"/><rect x="672.6" y="633.2" width="18.4" height="1.2" fill="#6e6470" opacity="0.55"/><path d="M661 678H667.5" stroke="#8a94b0" stroke-width="0.8"/><rect x="668.0" y="666.0" width="35.5" height="26.5" fill="url(#bg)" stroke="#c9b8b0" stroke-width="1"/><rect x="698.0" y="668.0" width="4" height="6" fill="#f4f4f4" stroke="#777" stroke-width="0.6"/><rect x="696.5" y="669.2" width="2.4" height="1.2" fill="#f4f4f4" stroke="#777" stroke-width="0.5"/><rect x="696.5" y="671.4" width="2.4" height="1.2" fill="#f4f4f4" stroke="#777" stroke-width="0.5"/><rect x="669.2" y="668.7" width="25.2" height="1.2" fill="#6e6470" opacity="0.55"/><rect x="669.2" y="672.0" width="25.2" height="1.2" fill="#6e6470" opacity="0.55"/><rect x="672.5" y="675.3" width="18.5" height="1.2" fill="#6e6470" opacity="0.55"/><path d="M716.5 533V565.75" stroke="#5a6482" stroke-width="1.7"/><path d="M716.5 565.75V656" stroke="#8a94b0" stroke-width="1.1"/><path d="M714.7 535.5L716.5 531.3L718.3 535.5z" fill="#fff" stroke="#5a6482" stroke-width="0.7"/><path d="M716.5 553.5H724.5" stroke="#8a94b0" stroke-width="0.8"/><rect x="725.0" y="541.0" width="35.0" height="26.0" fill="url(#bg)" stroke="#c9b8b0" stroke-width="1"/><rect x="754.5" y="543.0" width="4" height="6" fill="#f4f4f4" stroke="#777" stroke-width="0.6"/><rect x="753.0" y="544.2" width="2.4" height="1.2" fill="#f4f4f4" stroke="#777" stroke-width="0.5"/><rect x="753.0" y="546.4" width="2.4" height="1.2" fill="#f4f4f4" stroke="#777" stroke-width="0.5"/><rect x="726.1" y="543.7" width="24.7" height="1.2" fill="#6e6470" opacity="0.55"/><rect x="726.1" y="547.0" width="24.7" height="1.2" fill="#6e6470" opacity="0.55"/><rect x="726.1" y="550.3" width="24.7" height="1.2" fill="#6e6470" opacity="0.55"/><rect x="729.4" y="553.6" width="18.2" height="1.2" fill="#6e6470" opacity="0.55"/><path d="M716.5 578H724.5" stroke="#8a94b0" stroke-width="0.8"/><rect x="725.0" y="568.5" width="35.0" height="20" fill="url(#bg)" stroke="#c9b8b0" stroke-width="1"/><rect x="754.5" y="570.5" width="4" height="6" fill="#f4f4f4" stroke="#777" stroke-width="0.6"/><rect x="753.0" y="571.7" width="2.4" height="1.2" fill="#f4f4f4" stroke="#777" stroke-width="0.5"/><rect x="753.0" y="573.9" width="2.4" height="1.2" fill="#f4f4f4" stroke="#777" stroke-width="0.5"/><rect x="729.5" y="571.2" width="18.0" height="1.2" fill="#6e6470" opacity="0.55"/><path d="M716.5 605.5H724.5" stroke="#8a94b0" stroke-width="0.8"/><rect x="725.0" y="596.5" width="35.0" height="20" fill="url(#bg)" stroke="#c9b8b0" stroke-width="1"/><rect x="754.5" y="598.5" width="4" height="6" fill="#f4f4f4" stroke="#777" stroke-width="0.6"/><rect x="753.0" y="599.7" width="2.4" height="1.2" fill="#f4f4f4" stroke="#777" stroke-width="0.5"/><rect x="753.0" y="601.9" width="2.4" height="1.2" fill="#f4f4f4" stroke="#777" stroke-width="0.5"/><rect x="729.5" y="599.2" width="18.0" height="1.2" fill="#6e6470" opacity="0.55"/><path d="M716.5 631H724.5" stroke="#8a94b0" stroke-width="0.8"/><rect x="725.0" y="622.0" width="35.0" height="19.5" fill="url(#bg)" stroke="#c9b8b0" stroke-width="1"/><rect x="754.5" y="624.0" width="4" height="6" fill="#f4f4f4" stroke="#777" stroke-width="0.6"/><rect x="753.0" y="625.2" width="2.4" height="1.2" fill="#f4f4f4" stroke="#777" stroke-width="0.5"/><rect x="753.0" y="627.4" width="2.4" height="1.2" fill="#f4f4f4" stroke="#777" stroke-width="0.5"/><rect x="726.1" y="624.7" width="24.7" height="1.2" fill="#6e6470" opacity="0.55"/><rect x="726.1" y="628.0" width="24.7" height="1.2" fill="#6e6470" opacity="0.55"/><rect x="729.4" y="631.3" width="18.2" height="1.2" fill="#6e6470" opacity="0.55"/><path d="M716.5 656H726.5" stroke="#8a94b0" stroke-width="0.8"/><rect x="727.0" y="647.0" width="35.0" height="20.0" fill="url(#bg)" stroke="#c9b8b0" stroke-width="1"/><rect x="756.5" y="649.0" width="4" height="6" fill="#f4f4f4" stroke="#777" stroke-width="0.6"/><rect x="755.0" y="650.2" width="2.4" height="1.2" fill="#f4f4f4" stroke="#777" stroke-width="0.5"/><rect x="755.0" y="652.4" width="2.4" height="1.2" fill="#f4f4f4" stroke="#777" stroke-width="0.5"/><rect x="728.1" y="649.7" width="24.7" height="1.2" fill="#6e6470" opacity="0.55"/><rect x="731.4" y="653.0" width="18.2" height="1.2" fill="#6e6470" opacity="0.55"/><path d="M773 533V564.25" stroke="#5a6482" stroke-width="1.7"/><path d="M773 564.25V605.5" stroke="#8a94b0" stroke-width="1.1"/><path d="M771.2 535.5L773 531.3L774.8 535.5z" fill="#fff" stroke="#5a6482" stroke-width="0.7"/><path d="M773 550.5H781" stroke="#8a94b0" stroke-width="0.8"/><rect x="781.5" y="541.0" width="35.5" height="20.0" fill="url(#bg)" stroke="#c9b8b0" stroke-width="1"/><rect x="811.5" y="543.0" width="4" height="6" fill="#f4f4f4" stroke="#777" stroke-width="0.6"/><rect x="810.0" y="544.2" width="2.4" height="1.2" fill="#f4f4f4" stroke="#777" stroke-width="0.5"/><rect x="810.0" y="546.4" width="2.4" height="1.2" fill="#f4f4f4" stroke="#777" stroke-width="0.5"/><rect x="786.1" y="543.7" width="18.4" height="1.2" fill="#6e6470" opacity="0.55"/><path d="M773 578H781" stroke="#8a94b0" stroke-width="0.8"/><rect x="781.5" y="568.5" width="35.5" height="20" fill="url(#bg)" stroke="#c9b8b0" stroke-width="1"/><rect x="811.5" y="570.5" width="4" height="6" fill="#f4f4f4" stroke="#777" stroke-width="0.6"/><rect x="810.0" y="571.7" width="2.4" height="1.2" fill="#f4f4f4" stroke="#777" stroke-width="0.5"/><rect x="810.0" y="573.9" width="2.4" height="1.2" fill="#f4f4f4" stroke="#777" stroke-width="0.5"/><rect x="786.1" y="571.2" width="18.4" height="1.2" fill="#6e6470" opacity="0.55"/><path d="M773 605.5H781" stroke="#8a94b0" stroke-width="0.8"/><rect x="781.5" y="596.5" width="35.5" height="20" fill="url(#bg)" stroke="#c9b8b0" stroke-width="1"/><rect x="811.5" y="598.5" width="4" height="6" fill="#f4f4f4" stroke="#777" stroke-width="0.6"/><rect x="810.0" y="599.7" width="2.4" height="1.2" fill="#f4f4f4" stroke="#777" stroke-width="0.5"/><rect x="810.0" y="601.9" width="2.4" height="1.2" fill="#f4f4f4" stroke="#777" stroke-width="0.5"/><rect x="786.1" y="599.2" width="18.4" height="1.2" fill="#6e6470" opacity="0.55"/><path d="M830 533V564.25" stroke="#5a6482" stroke-width="1.7"/><path d="M830 564.25V605.5" stroke="#8a94b0" stroke-width="1.1"/><path d="M828.2 535.5L830 531.3L831.8 535.5z" fill="#fff" stroke="#5a6482" stroke-width="0.7"/><path d="M830 550.5H838" stroke="#8a94b0" stroke-width="0.8"/><rect x="838.5" y="541.0" width="35" height="20.0" fill="url(#bg)" stroke="#c9b8b0" stroke-width="1"/><rect x="868.0" y="543.0" width="4" height="6" fill="#f4f4f4" stroke="#777" stroke-width="0.6"/><rect x="866.5" y="544.2" width="2.4" height="1.2" fill="#f4f4f4" stroke="#777" stroke-width="0.5"/><rect x="866.5" y="546.4" width="2.4" height="1.2" fill="#f4f4f4" stroke="#777" stroke-width="0.5"/><rect x="843.0" y="543.7" width="18.0" height="1.2" fill="#6e6470" opacity="0.55"/><path d="M830 578H838" stroke="#8a94b0" stroke-width="0.8"/><rect x="838.5" y="568.5" width="35" height="20" fill="url(#bg)" stroke="#c9b8b0" stroke-width="1"/><rect x="868.0" y="570.5" width="4" height="6" fill="#f4f4f4" stroke="#777" stroke-width="0.6"/><rect x="866.5" y="571.7" width="2.4" height="1.2" fill="#f4f4f4" stroke="#777" stroke-width="0.5"/><rect x="866.5" y="573.9" width="2.4" height="1.2" fill="#f4f4f4" stroke="#777" stroke-width="0.5"/><rect x="843.0" y="571.2" width="18.0" height="1.2" fill="#6e6470" opacity="0.55"/><path d="M830 605.5H838" stroke="#8a94b0" stroke-width="0.8"/><rect x="838.5" y="596.5" width="35" height="20" fill="url(#bg)" stroke="#c9b8b0" stroke-width="1"/><rect x="868.0" y="598.5" width="4" height="6" fill="#f4f4f4" stroke="#777" stroke-width="0.6"/><rect x="866.5" y="599.7" width="2.4" height="1.2" fill="#f4f4f4" stroke="#777" stroke-width="0.5"/><rect x="866.5" y="601.9" width="2.4" height="1.2" fill="#f4f4f4" stroke="#777" stroke-width="0.5"/><rect x="843.0" y="599.2" width="18.0" height="1.2" fill="#6e6470" opacity="0.55"/><rect x="1487.8" y="457.3" width="38.4" height="23" fill="url(#bg)" stroke="#e8323a" stroke-width="1.6"/><rect x="1489.8" y="459.3" width="34.4" height="19" fill="none" stroke="#f39a2a" stroke-width="0.8" stroke-dasharray="1.2 1.2"/><rect x="1520.5" y="459.5" width="4" height="6" fill="#f7a534" stroke="#e07a10" stroke-width="0.6"/><rect x="1519" y="460.7" width="2.4" height="1.2" fill="#f7a534" stroke="#e07a10" stroke-width="0.5"/><rect x="1519" y="462.9" width="2.4" height="1.2" fill="#f7a534" stroke="#e07a10" stroke-width="0.5"/><rect x="1492" y="461.5" width="25" height="1.2" fill="#6e6470" opacity="0.6"/><rect x="1500" y="464.8" width="11" height="1.2" fill="#6e6470" opacity="0.6"/><path d="M1507 482V494.5" stroke="#5a6482" stroke-width="1.8"/><path d="M1505.3 484.8L1507 481.2L1508.7 484.8z" fill="#fff" stroke="#5a6482" stroke-width="0.7"/><path d="M1423 509V494.5H1592V509M1478.5 494.5V509M1535 494.5V509" fill="none" stroke="#8a94b0" stroke-width="0.9"/><path d="M1427 509L1432 498.5H1583.5L1588 509" fill="none" stroke="#a8b0c8" stroke-width="0.8"/><rect x="1497" y="497.6" width="11" height="1.3" fill="#c0c0c8"/><path d="M1441 519.5H1460M1497 519.5H1517" stroke="#8a94b0" stroke-width="0.8"/><rect x="1448" y="516.3" width="7" height="1.2" fill="#aaa"/><rect x="1504" y="516.3" width="7" height="1.2" fill="#aaa"/><rect x="1405.5" y="509.5" width="35" height="20.5" fill="url(#bg)" stroke="#c9b8b0" stroke-width="1"/><rect x="1435.0" y="511.5" width="4" height="6" fill="#f4f4f4" stroke="#777" stroke-width="0.6"/><rect x="1433.5" y="512.7" width="2.4" height="1.2" fill="#f4f4f4" stroke="#777" stroke-width="0.5"/><rect x="1433.5" y="514.9" width="2.4" height="1.2" fill="#f4f4f4" stroke="#777" stroke-width="0.5"/><rect x="1406.7" y="512.2" width="24.7" height="1.2" fill="#6e6470" opacity="0.55"/><rect x="1409.9" y="515.5" width="18.2" height="1.2" fill="#6e6470" opacity="0.55"/><rect x="1460.5" y="509.5" width="36" height="20.5" fill="url(#bg)" stroke="#c9b8b0" stroke-width="1"/><rect x="1491.0" y="511.5" width="4" height="6" fill="#f4f4f4" stroke="#777" stroke-width="0.6"/><rect x="1489.5" y="512.7" width="2.4" height="1.2" fill="#f4f4f4" stroke="#777" stroke-width="0.5"/><rect x="1489.5" y="514.9" width="2.4" height="1.2" fill="#f4f4f4" stroke="#777" stroke-width="0.5"/><rect x="1465.1" y="512.2" width="18.8" height="1.2" fill="#6e6470" opacity="0.55"/><rect x="1517.5" y="509.5" width="36" height="20.5" fill="url(#bg)" stroke="#c9b8b0" stroke-width="1"/><rect x="1548.0" y="511.5" width="4" height="6" fill="#f4f4f4" stroke="#777" stroke-width="0.6"/><rect x="1546.5" y="512.7" width="2.4" height="1.2" fill="#f4f4f4" stroke="#777" stroke-width="0.5"/><rect x="1546.5" y="514.9" width="2.4" height="1.2" fill="#f4f4f4" stroke="#777" stroke-width="0.5"/><rect x="1522.1" y="512.2" width="18.8" height="1.2" fill="#6e6470" opacity="0.55"/><rect x="1574.5" y="509.5" width="35" height="20.5" fill="url(#bg)" stroke="#c9b8b0" stroke-width="1"/><rect x="1604.0" y="511.5" width="4" height="6" fill="#f4f4f4" stroke="#777" stroke-width="0.6"/><rect x="1602.5" y="512.7" width="2.4" height="1.2" fill="#f4f4f4" stroke="#777" stroke-width="0.5"/><rect x="1602.5" y="514.9" width="2.4" height="1.2" fill="#f4f4f4" stroke="#777" stroke-width="0.5"/><rect x="1579.0" y="512.2" width="18.0" height="1.2" fill="#6e6470" opacity="0.55"/><path d="M1423 533V565.75" stroke="#5a6482" stroke-width="1.7"/><path d="M1423 565.75V678" stroke="#8a94b0" stroke-width="1.1"/><path d="M1421.2 535.5L1423 531.3L1424.8 535.5z" fill="#fff" stroke="#5a6482" stroke-width="0.7"/><path d="M1423 550.5H1429.5" stroke="#8a94b0" stroke-width="0.8"/><rect x="1430.0" y="541.0" width="35.5" height="20.0" fill="url(#bg)" stroke="#c9b8b0" stroke-width="1"/><rect x="1460.0" y="543.0" width="4" height="6" fill="#f4f4f4" stroke="#777" stroke-width="0.6"/><rect x="1458.5" y="544.2" width="2.4" height="1.2" fill="#f4f4f4" stroke="#777" stroke-width="0.5"/><rect x="1458.5" y="546.4" width="2.4" height="1.2" fill="#f4f4f4" stroke="#777" stroke-width="0.5"/><rect x="1431.2" y="543.7" width="25.2" height="1.2" fill="#6e6470" opacity="0.55"/><rect x="1434.5" y="547.0" width="18.5" height="1.2" fill="#6e6470" opacity="0.55"/><path d="M1423 581H1429.5" stroke="#8a94b0" stroke-width="0.8"/><rect x="1430.0" y="568.5" width="35.5" height="26.5" fill="url(#bg)" stroke="#c9b8b0" stroke-width="1"/><rect x="1460.0" y="570.5" width="4" height="6" fill="#f4f4f4" stroke="#777" stroke-width="0.6"/><rect x="1458.5" y="571.7" width="2.4" height="1.2" fill="#f4f4f4" stroke="#777" stroke-width="0.5"/><rect x="1458.5" y="573.9" width="2.4" height="1.2" fill="#f4f4f4" stroke="#777" stroke-width="0.5"/><rect x="1431.2" y="571.2" width="25.2" height="1.2" fill="#6e6470" opacity="0.55"/><rect x="1431.2" y="574.5" width="25.2" height="1.2" fill="#6e6470" opacity="0.55"/><rect x="1431.2" y="577.8" width="25.2" height="1.2" fill="#6e6470" opacity="0.55"/><rect x="1434.5" y="581.1" width="18.5" height="1.2" fill="#6e6470" opacity="0.55"/><path d="M1423 608.5H1429.5" stroke="#8a94b0" stroke-width="0.8"/><rect x="1430.0" y="596.5" width="35.5" height="26.5" fill="url(#bg)" stroke="#c9b8b0" stroke-width="1"/><rect x="1460.0" y="598.5" width="4" height="6" fill="#f4f4f4" stroke="#777" stroke-width="0.6"/><rect x="1458.5" y="599.7" width="2.4" height="1.2" fill="#f4f4f4" stroke="#777" stroke-width="0.5"/><rect x="1458.5" y="601.9" width="2.4" height="1.2" fill="#f4f4f4" stroke="#777" stroke-width="0.5"/><rect x="1431.2" y="599.2" width="25.2" height="1.2" fill="#6e6470" opacity="0.55"/><rect x="1431.2" y="602.5" width="25.2" height="1.2" fill="#6e6470" opacity="0.55"/><rect x="1431.2" y="605.8" width="25.2" height="1.2" fill="#6e6470" opacity="0.55"/><rect x="1434.5" y="609.1" width="18.5" height="1.2" fill="#6e6470" opacity="0.55"/><path d="M1423 642.5H1429.5" stroke="#8a94b0" stroke-width="0.8"/><rect x="1430.0" y="630.5" width="35.5" height="26.5" fill="url(#bg)" stroke="#c9b8b0" stroke-width="1"/><rect x="1460.0" y="632.5" width="4" height="6" fill="#f4f4f4" stroke="#777" stroke-width="0.6"/><rect x="1458.5" y="633.7" width="2.4" height="1.2" fill="#f4f4f4" stroke="#777" stroke-width="0.5"/><rect x="1458.5" y="635.9" width="2.4" height="1.2" fill="#f4f4f4" stroke="#777" stroke-width="0.5"/><rect x="1434.6" y="633.2" width="18.4" height="1.2" fill="#6e6470" opacity="0.55"/><path d="M1423 678H1429.5" stroke="#8a94b0" stroke-width="0.8"/><rect x="1430.0" y="666.0" width="35.5" height="26.5" fill="url(#bg)" stroke="#c9b8b0" stroke-width="1"/><rect x="1460.0" y="668.0" width="4" height="6" fill="#f4f4f4" stroke="#777" stroke-width="0.6"/><rect x="1458.5" y="669.2" width="2.4" height="1.2" fill="#f4f4f4" stroke="#777" stroke-width="0.5"/><rect x="1458.5" y="671.4" width="2.4" height="1.2" fill="#f4f4f4" stroke="#777" stroke-width="0.5"/><rect x="1431.2" y="668.7" width="25.2" height="1.2" fill="#6e6470" opacity="0.55"/><rect x="1431.2" y="672.0" width="25.2" height="1.2" fill="#6e6470" opacity="0.55"/><rect x="1434.5" y="675.3" width="18.5" height="1.2" fill="#6e6470" opacity="0.55"/><path d="M1478.5 533V565.75" stroke="#5a6482" stroke-width="1.7"/><path d="M1478.5 565.75V656" stroke="#8a94b0" stroke-width="1.1"/><path d="M1476.7 535.5L1478.5 531.3L1480.3 535.5z" fill="#fff" stroke="#5a6482" stroke-width="0.7"/><path d="M1478.5 553.5H1486.5" stroke="#8a94b0" stroke-width="0.8"/><rect x="1487.0" y="541.0" width="35.0" height="26.0" fill="url(#bg)" stroke="#c9b8b0" stroke-width="1"/><rect x="1516.5" y="543.0" width="4" height="6" fill="#f4f4f4" stroke="#777" stroke-width="0.6"/><rect x="1515.0" y="544.2" width="2.4" height="1.2" fill="#f4f4f4" stroke="#777" stroke-width="0.5"/><rect x="1515.0" y="546.4" width="2.4" height="1.2" fill="#f4f4f4" stroke="#777" stroke-width="0.5"/><rect x="1488.2" y="543.7" width="24.7" height="1.2" fill="#6e6470" opacity="0.55"/><rect x="1488.2" y="547.0" width="24.7" height="1.2" fill="#6e6470" opacity="0.55"/><rect x="1488.2" y="550.3" width="24.7" height="1.2" fill="#6e6470" opacity="0.55"/><rect x="1491.4" y="553.6" width="18.2" height="1.2" fill="#6e6470" opacity="0.55"/><path d="M1478.5 578H1486.5" stroke="#8a94b0" stroke-width="0.8"/><rect x="1487.0" y="568.5" width="35.0" height="20" fill="url(#bg)" stroke="#c9b8b0" stroke-width="1"/><rect x="1516.5" y="570.5" width="4" height="6" fill="#f4f4f4" stroke="#777" stroke-width="0.6"/><rect x="1515.0" y="571.7" width="2.4" height="1.2" fill="#f4f4f4" stroke="#777" stroke-width="0.5"/><rect x="1515.0" y="573.9" width="2.4" height="1.2" fill="#f4f4f4" stroke="#777" stroke-width="0.5"/><rect x="1491.5" y="571.2" width="18.0" height="1.2" fill="#6e6470" opacity="0.55"/><path d="M1478.5 605.5H1486.5" stroke="#8a94b0" stroke-width="0.8"/><rect x="1487.0" y="596.5" width="35.0" height="20" fill="url(#bg)" stroke="#c9b8b0" stroke-width="1"/><rect x="1516.5" y="598.5" width="4" height="6" fill="#f4f4f4" stroke="#777" stroke-width="0.6"/><rect x="1515.0" y="599.7" width="2.4" height="1.2" fill="#f4f4f4" stroke="#777" stroke-width="0.5"/><rect x="1515.0" y="601.9" width="2.4" height="1.2" fill="#f4f4f4" stroke="#777" stroke-width="0.5"/><rect x="1491.5" y="599.2" width="18.0" height="1.2" fill="#6e6470" opacity="0.55"/><path d="M1478.5 631H1486.5" stroke="#8a94b0" stroke-width="0.8"/><rect x="1487.0" y="622.0" width="35.0" height="19.5" fill="url(#bg)" stroke="#c9b8b0" stroke-width="1"/><rect x="1516.5" y="624.0" width="4" height="6" fill="#f4f4f4" stroke="#777" stroke-width="0.6"/><rect x="1515.0" y="625.2" width="2.4" height="1.2" fill="#f4f4f4" stroke="#777" stroke-width="0.5"/><rect x="1515.0" y="627.4" width="2.4" height="1.2" fill="#f4f4f4" stroke="#777" stroke-width="0.5"/><rect x="1488.2" y="624.7" width="24.7" height="1.2" fill="#6e6470" opacity="0.55"/><rect x="1488.2" y="628.0" width="24.7" height="1.2" fill="#6e6470" opacity="0.55"/><rect x="1491.4" y="631.3" width="18.2" height="1.2" fill="#6e6470" opacity="0.55"/><path d="M1478.5 656H1488.5" stroke="#8a94b0" stroke-width="0.8"/><rect x="1489.0" y="647.0" width="35.0" height="20.0" fill="url(#bg)" stroke="#c9b8b0" stroke-width="1"/><rect x="1518.5" y="649.0" width="4" height="6" fill="#f4f4f4" stroke="#777" stroke-width="0.6"/><rect x="1517.0" y="650.2" width="2.4" height="1.2" fill="#f4f4f4" stroke="#777" stroke-width="0.5"/><rect x="1517.0" y="652.4" width="2.4" height="1.2" fill="#f4f4f4" stroke="#777" stroke-width="0.5"/><rect x="1490.2" y="649.7" width="24.7" height="1.2" fill="#6e6470" opacity="0.55"/><rect x="1493.4" y="653.0" width="18.2" height="1.2" fill="#6e6470" opacity="0.55"/><path d="M1535 533V564.25" stroke="#5a6482" stroke-width="1.7"/><path d="M1535 564.25V605.5" stroke="#8a94b0" stroke-width="1.1"/><path d="M1533.2 535.5L1535 531.3L1536.8 535.5z" fill="#fff" stroke="#5a6482" stroke-width="0.7"/><path d="M1535 550.5H1543" stroke="#8a94b0" stroke-width="0.8"/><rect x="1543.5" y="541.0" width="35.5" height="20.0" fill="url(#bg)" stroke="#c9b8b0" stroke-width="1"/><rect x="1573.5" y="543.0" width="4" height="6" fill="#f4f4f4" stroke="#777" stroke-width="0.6"/><rect x="1572.0" y="544.2" width="2.4" height="1.2" fill="#f4f4f4" stroke="#777" stroke-width="0.5"/><rect x="1572.0" y="546.4" width="2.4" height="1.2" fill="#f4f4f4" stroke="#777" stroke-width="0.5"/><rect x="1548.1" y="543.7" width="18.4" height="1.2" fill="#6e6470" opacity="0.55"/><path d="M1535 578H1543" stroke="#8a94b0" stroke-width="0.8"/><rect x="1543.5" y="568.5" width="35.5" height="20" fill="url(#bg)" stroke="#c9b8b0" stroke-width="1"/><rect x="1573.5" y="570.5" width="4" height="6" fill="#f4f4f4" stroke="#777" stroke-width="0.6"/><rect x="1572.0" y="571.7" width="2.4" height="1.2" fill="#f4f4f4" stroke="#777" stroke-width="0.5"/><rect x="1572.0" y="573.9" width="2.4" height="1.2" fill="#f4f4f4" stroke="#777" stroke-width="0.5"/><rect x="1548.1" y="571.2" width="18.4" height="1.2" fill="#6e6470" opacity="0.55"/><path d="M1535 605.5H1543" stroke="#8a94b0" stroke-width="0.8"/><rect x="1543.5" y="596.5" width="35.5" height="20" fill="url(#bg)" stroke="#c9b8b0" stroke-width="1"/><rect x="1573.5" y="598.5" width="4" height="6" fill="#f4f4f4" stroke="#777" stroke-width="0.6"/><rect x="1572.0" y="599.7" width="2.4" height="1.2" fill="#f4f4f4" stroke="#777" stroke-width="0.5"/><rect x="1572.0" y="601.9" width="2.4" height="1.2" fill="#f4f4f4" stroke="#777" stroke-width="0.5"/><rect x="1548.1" y="599.2" width="18.4" height="1.2" fill="#6e6470" opacity="0.55"/><path d="M1592 533V564.25" stroke="#5a6482" stroke-width="1.7"/><path d="M1592 564.25V605.5" stroke="#8a94b0" stroke-width="1.1"/><path d="M1590.2 535.5L1592 531.3L1593.8 535.5z" fill="#fff" stroke="#5a6482" stroke-width="0.7"/><path d="M1592 550.5H1600" stroke="#8a94b0" stroke-width="0.8"/><rect x="1600.5" y="541.0" width="35" height="20.0" fill="url(#bg)" stroke="#c9b8b0" stroke-width="1"/><rect x="1630.0" y="543.0" width="4" height="6" fill="#f4f4f4" stroke="#777" stroke-width="0.6"/><rect x="1628.5" y="544.2" width="2.4" height="1.2" fill="#f4f4f4" stroke="#777" stroke-width="0.5"/><rect x="1628.5" y="546.4" width="2.4" height="1.2" fill="#f4f4f4" stroke="#777" stroke-width="0.5"/><rect x="1605.0" y="543.7" width="18.0" height="1.2" fill="#6e6470" opacity="0.55"/><path d="M1592 578H1600" stroke="#8a94b0" stroke-width="0.8"/><rect x="1600.5" y="568.5" width="35" height="20" fill="url(#bg)" stroke="#c9b8b0" stroke-width="1"/><rect x="1630.0" y="570.5" width="4" height="6" fill="#f4f4f4" stroke="#777" stroke-width="0.6"/><rect x="1628.5" y="571.7" width="2.4" height="1.2" fill="#f4f4f4" stroke="#777" stroke-width="0.5"/><rect x="1628.5" y="573.9" width="2.4" height="1.2" fill="#f4f4f4" stroke="#777" stroke-width="0.5"/><rect x="1605.0" y="571.2" width="18.0" height="1.2" fill="#6e6470" opacity="0.55"/><path d="M1592 605.5H1600" stroke="#8a94b0" stroke-width="0.8"/><rect x="1600.5" y="596.5" width="35" height="20" fill="url(#bg)" stroke="#c9b8b0" stroke-width="1"/><rect x="1630.0" y="598.5" width="4" height="6" fill="#f4f4f4" stroke="#777" stroke-width="0.6"/><rect x="1628.5" y="599.7" width="2.4" height="1.2" fill="#f4f4f4" stroke="#777" stroke-width="0.5"/><rect x="1628.5" y="601.9" width="2.4" height="1.2" fill="#f4f4f4" stroke="#777" stroke-width="0.5"/><rect x="1605.0" y="599.2" width="18.0" height="1.2" fill="#6e6470" opacity="0.55"/></svg>
<div class="a" style="left:378px;top:705px;width:1538px;height:1px;background:#2a2c2e"></div>
<div class="a" style="left:378px;top:706px;width:1538px;height:5px;background:#62676b"></div>
<div class="a" style="left:1132px;top:708px;width:20px;height:2px;background:#d0d0d0"></div>
<svg class="a" style="left:1164px;top:706px" width="7" height="5" viewBox="0 0 7 5"><path d="M0 0H7L3.5 5z" fill="#e0e0e0"/></svg>


<!-- PROPERTIES -->
<div class="a" style="left:378px;top:711px;width:1538px;height:48px;background:#45494c"></div>
<div class="a" style="left:1136px;top:739px;width:1px;height:20px;background:#505457"></div>
<div class="a" style="left:378px;top:759px;width:1538px;height:1px;background:#5e6265"></div>
<svg class="a" style="left:1101px;top:719px" width="13" height="14"><use href="#comp"/></svg>
<div class="t" style="left:1119px;top:717px;color:#dcdcdc">Component A</div>
<div class="a" style="left:1793px;top:714px;width:122px;height:21px;border:1px solid #7a7f83;border-radius:4px;background:#5a5f63"></div>
<div class="a" style="left:1794px;top:715px;width:58px;height:19px;background:#53575b;border-radius:3px 0 0 3px;box-shadow:inset 1px 1px 2px rgba(0,0,0,0.25)"></div>
<div class="a" style="left:1852px;top:715px;width:1px;height:19px;background:#7a7f83"></div>
<div class="a" style="left:1886px;top:715px;width:1px;height:19px;background:#7a7f83"></div>
<div class="t" style="left:1794px;top:716px;width:58px;text-align:center;font-size:11px;line-height:14px;color:#d4d4d4">Modified</div>
<div class="t" style="left:1853px;top:716px;width:33px;text-align:center;font-size:11px;line-height:14px;color:#d4d4d4">Set</div>
<div class="t" style="left:1887px;top:716px;width:28px;text-align:center;font-size:11px;line-height:14px;color:#d4d4d4">All</div>
<div class="sdot" style="left:717px;top:744px"></div>
<div class="t" style="left:731px;top:739px;color:#dcdcdc">Unmodified</div>
<div class="sdot o" style="left:1484px;top:744px"></div>
<div class="t" style="left:1497px;top:739px;color:#dcdcdc">Modified</div>
<div class="a" style="left:378px;top:760px;width:1538px;height:27px;background:#45494c"></div>
<svg class="a" style="left:385px;top:772px" width="11" height="7" viewBox="0 0 11 7"><path d="M0 0H11L5.5 7z" fill="#e0e0e0"/></svg>
<div class="t" style="left:378px;top:765px;width:1524px;text-align:center;font-size:11px;color:#e0e0e0">Element Properties</div>
<svg class="a" style="left:1884px;top:772px" width="11" height="7" viewBox="0 0 11 7"><path d="M0 0H11L5.5 7z" fill="#e0e0e0"/></svg>
<div class="a" style="left:378px;top:787px;width:1524px;height:242px;background:#303436"></div>
<div class="a" style="left:1139px;top:787px;width:1px;height:242px;background:#5a5e61"></div>
<div class="a" style="left:378px;top:836px;width:1524px;height:1px;background:#5a5e61"></div>
<div class="a" style="left:378px;top:996px;width:1524px;height:1px;background:#5a5e61"></div>
<div class="a" style="left:1902px;top:760px;width:14px;height:269px;background:#2b2b2b"></div>
<div class="a" style="left:1902px;top:760px;width:1px;height:269px;background:#5a5e61"></div>
<svg class="a" style="left:1906px;top:765px" width="9" height="7" viewBox="0 0 9 7"><path d="M4.5 0L9 7H0z" fill="#a0a0a0"/></svg>
<div class="a" style="left:1906px;top:778px;width:9px;height:133px;border-radius:4.5px;background:#9e9e9e"></div>
<svg class="a" style="left:1906px;top:1018px" width="9" height="7" viewBox="0 0 9 7"><path d="M4.5 7L9 0H0z" fill="#a0a0a0"/></svg>
<style>
.pl{position:absolute;font-size:12px;font-style:italic;color:#8c9094;white-space:nowrap;line-height:14px}
.pv{position:absolute;font-size:13px;color:#dcdcdc;white-space:nowrap;line-height:18.6px}
.del{background:#ffc7c7;color:#000;text-decoration:line-through;text-decoration-thickness:1px}
.ins{background:#c9fcc9;color:#000;text-decoration:underline;text-underline-offset:2px}
.pv span{padding:0}
</style>
<div class="pl" style="left:383px;top:793px">Name</div>
<div class="pv" style="left:383px;top:812px">Component A</div>
<div class="pl" style="left:1146px;top:793px">Name</div>
<div class="pv" style="left:1145px;top:812px"><span class="del">Component A</span><span class="ins">Air Quality Sensor Solution</span></div>
<div class="pl" style="left:383px;top:843px">Connections</div>
<div class="pv" style="left:383px;top:861px">Edge Device (ESP32) → Component A,<br>Rest Server → Component A,<br>DashBoard WebUI → Component A,<br>Database → Component A</div>
<div class="pl" style="left:1146px;top:843px">Connections</div>
<div class="pv" style="left:1145px;top:861px">Edge Device (ESP32) → <span class="del">Component A,</span><br><span class="del">Rest Server → Component A,</span><br><span class="del">DashBoard WebUI → Component A,</span><br><span class="del">Database → Component A</span><span class="ins">Air Quality Sensor Solution,</span><br><span class="ins">Rest Server → Air Quality Sensor Solution,</span><br><span class="ins">DashBoard WebUI → Air Quality Sensor Solution,</span><br><span class="ins">Database → Air Quality Sensor Solution</span></div>
<div class="pl" style="left:383px;top:1003px">Incomings</div>
<div class="pv" style="left:383px;top:1021px">Edge Device (ESP32) → Component A,</div>
<div class="pl" style="left:1146px;top:1003px">Incomings</div>
<div class="pv" style="left:1145px;top:1021px">Edge Device (ESP32) → <span class="del">Component A,</span></div>


</body></html>
